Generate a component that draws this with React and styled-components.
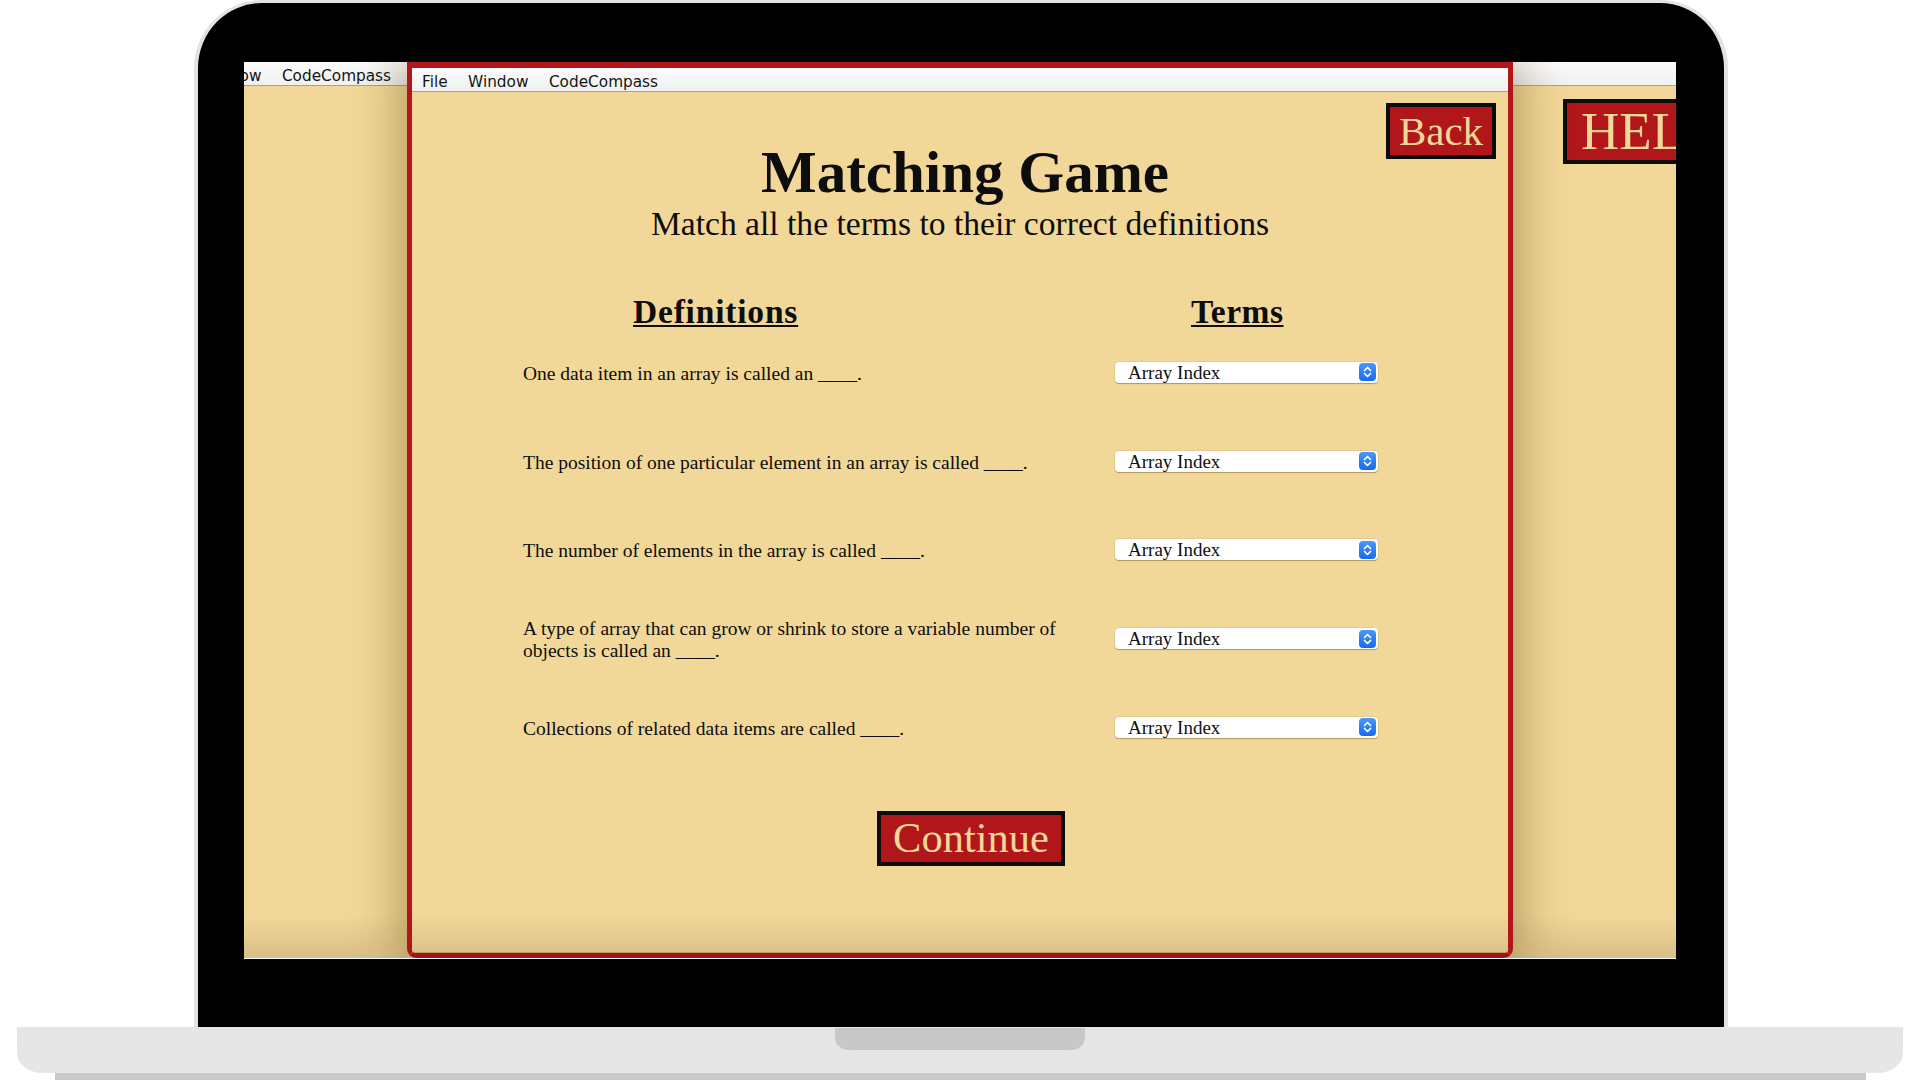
import React from "react";
import styled, { createGlobalStyle } from "styled-components";

const RED = "#b1171a";
const BEIGE = "#f2d898";
const SERIF = `"Liberation Serif", "Times New Roman", serif`;
const SANS = `"DejaVu Sans", "Liberation Sans", sans-serif`;

const GlobalStyle = createGlobalStyle`
  html, body { margin: 0; padding: 0; background: #fff; }
  body { width: 1920px; height: 1080px; overflow: hidden; }
`;

const Page = styled.div`
  width: 1920px;
  height: 1080px;
  background: #fff;
  overflow: hidden;
  display: flex;
  flex-direction: column;
  align-items: center;
`;

const Lid = styled.div`
  box-sizing: border-box;
  width: 1534px;
  height: 1027px;
  margin-left: 2px;
  flex: 0 0 auto;
  background: #000;
  border: 4px solid #e3e3e3;
  border-top-width: 3px;
  border-bottom: 0;
  border-radius: 68px 68px 0 0;
  padding: 59px 48px 68px 46px;
  display: flex;
`;

const Screen = styled.div`
  position: relative;
  flex: 1;
  overflow: hidden;
  display: flex;
  flex-direction: column;
  border-bottom: 1px solid #fff;
  background: ${BEIGE};
`;

const MenuBar = styled.div`
  flex: 0 0 auto;
  box-sizing: border-box;
  height: ${(p) => p.$h}px;
  display: flex;
  align-items: center;
  padding-top: 4px;
  background: linear-gradient(#fcfcfc, #f0f0f0);
  border-bottom: 1px solid #a2a2a2;
  overflow: hidden;
`;

const MenuItems = styled.div`
  display: flex;
  gap: 20.5px;
  margin-left: ${(p) => p.$offset}px;
  font: 15.3px ${SANS};
  color: #141414;
  white-space: nowrap;
`;

const MenuItem = styled.span``;

const BackBody = styled.div`
  flex: 1;
  display: flex;
  align-items: flex-start;
  padding: 13px 0 0 1319px;
  background: linear-gradient(
    to bottom,
    ${BEIGE} 0,
    ${BEIGE} calc(100% - 44px),
    #d8bf88 100%
  );
`;

const RedButton = styled.div`
  flex: 0 0 auto;
  box-sizing: border-box;
  display: flex;
  align-items: center;
  justify-content: ${(p) => (p.$left ? "flex-start" : "center")};
  width: ${(p) => p.$w}px;
  height: ${(p) => p.$h}px;
  padding-left: ${(p) => p.$pad || 0}px;
  background: ${RED};
  border: 4px solid #0c0c0c;
  color: ${BEIGE};
  font-family: ${SERIF};
  font-size: ${(p) => p.$fs}px;
  line-height: 1;
  white-space: nowrap;
  overflow: hidden;
  cursor: pointer;
`;

const Window = styled.div`
  position: absolute;
  left: 163px;
  top: 0;
  bottom: 0;
  width: 1106px;
  box-sizing: border-box;
  display: flex;
  flex-direction: column;
  border: 5px solid ${RED};
  border-top-width: 6px;
  border-bottom-color: #a21214;
  border-radius: 0 0 9px 9px;
  box-shadow: 0 0 48px 6px rgba(90, 60, 10, 0.42);
  overflow: hidden;
`;

const Content = styled.div`
  flex: 1;
  display: flex;
  flex-direction: column;
  align-items: stretch;
  border-bottom: 1px solid #b99b63;
  background: linear-gradient(
    to bottom,
    ${BEIGE} 0,
    ${BEIGE} calc(100% - 40px),
    #dcc38b 100%
  );
  color: #0d0d0d;
  font-family: ${SERIF};
`;

const Header = styled.div`
  display: grid;
  grid-template-columns: 1fr auto 1fr;
  align-items: start;
  padding: 11px 12px 0 12px;
`;

const TitleBlock = styled.div`
  grid-column: 2;
  display: flex;
  flex-direction: column;
  align-items: center;
  padding-top: 40px;
`;

const Title = styled.h1`
  margin: 0 0 0 10px;
  font-size: 59px;
  line-height: 1;
  font-weight: bold;
  white-space: nowrap;
`;

const Subtitle = styled.p`
  margin: 5px 0 0;
  font-size: 33.6px;
  line-height: 1;
  white-space: nowrap;
`;

const BackSlot = styled.div`
  grid-column: 3;
  display: flex;
  justify-content: flex-end;
`;

const Table = styled.div`
  display: grid;
  grid-template-columns: 592px 263px;
  grid-auto-rows: 88.75px;
  margin: 0 0 0 111px;
`;

const HeadRow = styled.div`
  display: grid;
  grid-template-columns: 592px 263px;
  margin: 54px 0 0 111px;
`;

const Heading = styled.h2`
  margin: 0 0 0 ${(p) => p.$indent}px;
  font-size: 33.5px;
  line-height: 1;
  font-weight: bold;
  letter-spacing: ${(p) => p.$ls}px;
  text-decoration: underline;
  text-decoration-thickness: 2px;
  text-underline-offset: 2px;
  white-space: nowrap;
`;

const Definition = styled.div`
  align-self: center;
  width: 548px;
  padding-top: 3px;
  font-size: 19.5px;
  line-height: 22px;
`;

const SelectBox = styled.div`
  align-self: center;
  box-sizing: border-box;
  height: 21px;
  display: flex;
  align-items: center;
  justify-content: space-between;
  padding: 0 2px 0 13px;
  background: #fff;
  border-radius: 4px;
  box-shadow: 0 1px 1px rgba(120, 90, 30, 0.45), 0 0 0 0.5px rgba(0, 0, 0, 0.12);
  font-size: 19px;
  line-height: 1;
  color: #111;
`;

const Stepper = styled.span`
  width: 17px;
  height: 18px;
  border-radius: 4px;
  background: linear-gradient(#4a98fb, #1769f2);
  display: flex;
  align-items: center;
  justify-content: center;
`;

const Footer = styled.div`
  display: flex;
  justify-content: center;
  padding: 39px 0 0 22px;
`;

const Base = styled.div`
  flex: 0 0 auto;
  width: 1886px;
  height: 46px;
  background: #e6e6e6;
  border-radius: 0 0 26px 26px / 0 0 20px 20px;
  display: flex;
  justify-content: center;
  align-items: flex-start;
  padding-top: 1px;
  box-sizing: border-box;
`;

const Notch = styled.div`
  width: 250px;
  height: 22px;
  background: #c8c8c8;
  border-radius: 0 0 14px 14px / 0 0 12px 12px;
`;

const Foot = styled.div`
  flex: 0 0 auto;
  width: 1811px;
  height: 7px;
  background: #c9c9c9;
`;

const ROWS = [
  "One data item in an array is called an ____.",
  "The position of one particular element in an array is called ____.",
  "The number of elements in the array is called ____.",
  "A type of array that can grow or shrink to store a variable number of objects is called an ____.",
  "Collections of related data items are called ____.",
];

const Chevrons = () => (
  <svg width="11" height="14" viewBox="0 0 11 14">
    <path d="M2.5 5.5 L5.5 2.5 L8.5 5.5" stroke="#fff" strokeWidth="1.7" fill="none" strokeLinecap="round" strokeLinejoin="round" />
    <path d="M2.5 8.5 L5.5 11.5 L8.5 8.5" stroke="#fff" strokeWidth="1.7" fill="none" strokeLinecap="round" strokeLinejoin="round" />
  </svg>
);

const Menu = ({ offset }) => (
  <MenuItems $offset={offset}>
    <MenuItem>File</MenuItem>
    <MenuItem>Window</MenuItem>
    <MenuItem>CodeCompass</MenuItem>
  </MenuItems>
);

export default function App() {
  return (
    <>
      <GlobalStyle />
      <Page>
        <Lid>
          <Screen>
            <MenuBar $h={24}>
              <Menu offset={-89} />
            </MenuBar>
            <BackBody>
              <RedButton $w={168} $h={65} $fs={53} $left $pad={14}>
                HELP
              </RedButton>
            </BackBody>
            <Window>
              <MenuBar $h={24}>
                <Menu offset={10} />
              </MenuBar>
              <Content>
                <Header>
                  <TitleBlock>
                    <Title>Matching Game</Title>
                    <Subtitle>Match all the terms to their correct definitions</Subtitle>
                  </TitleBlock>
                  <BackSlot>
                    <RedButton $w={110} $h={56} $fs={41}>
                      Back
                    </RedButton>
                  </BackSlot>
                </Header>
                <HeadRow>
                  <Heading $indent={110} $ls={0.8}>Definitions</Heading>
                  <Heading $indent={76} $ls={0.5}>Terms</Heading>
                </HeadRow>
                <Table>
                  {ROWS.map((text, i) => (
                    <React.Fragment key={i}>
                      <Definition>{text}</Definition>
                      <SelectBox>
                        <span>Array Index</span>
                        <Stepper>
                          <Chevrons />
                        </Stepper>
                      </SelectBox>
                    </React.Fragment>
                  ))}
                </Table>
                <Footer>
                  <RedButton $w={188} $h={55} $fs={42.5}>
                    Continue
                  </RedButton>
                </Footer>
              </Content>
            </Window>
          </Screen>
        </Lid>
        <Base>
          <Notch />
        </Base>
        <Foot />
      </Page>
    </>
  );
}
